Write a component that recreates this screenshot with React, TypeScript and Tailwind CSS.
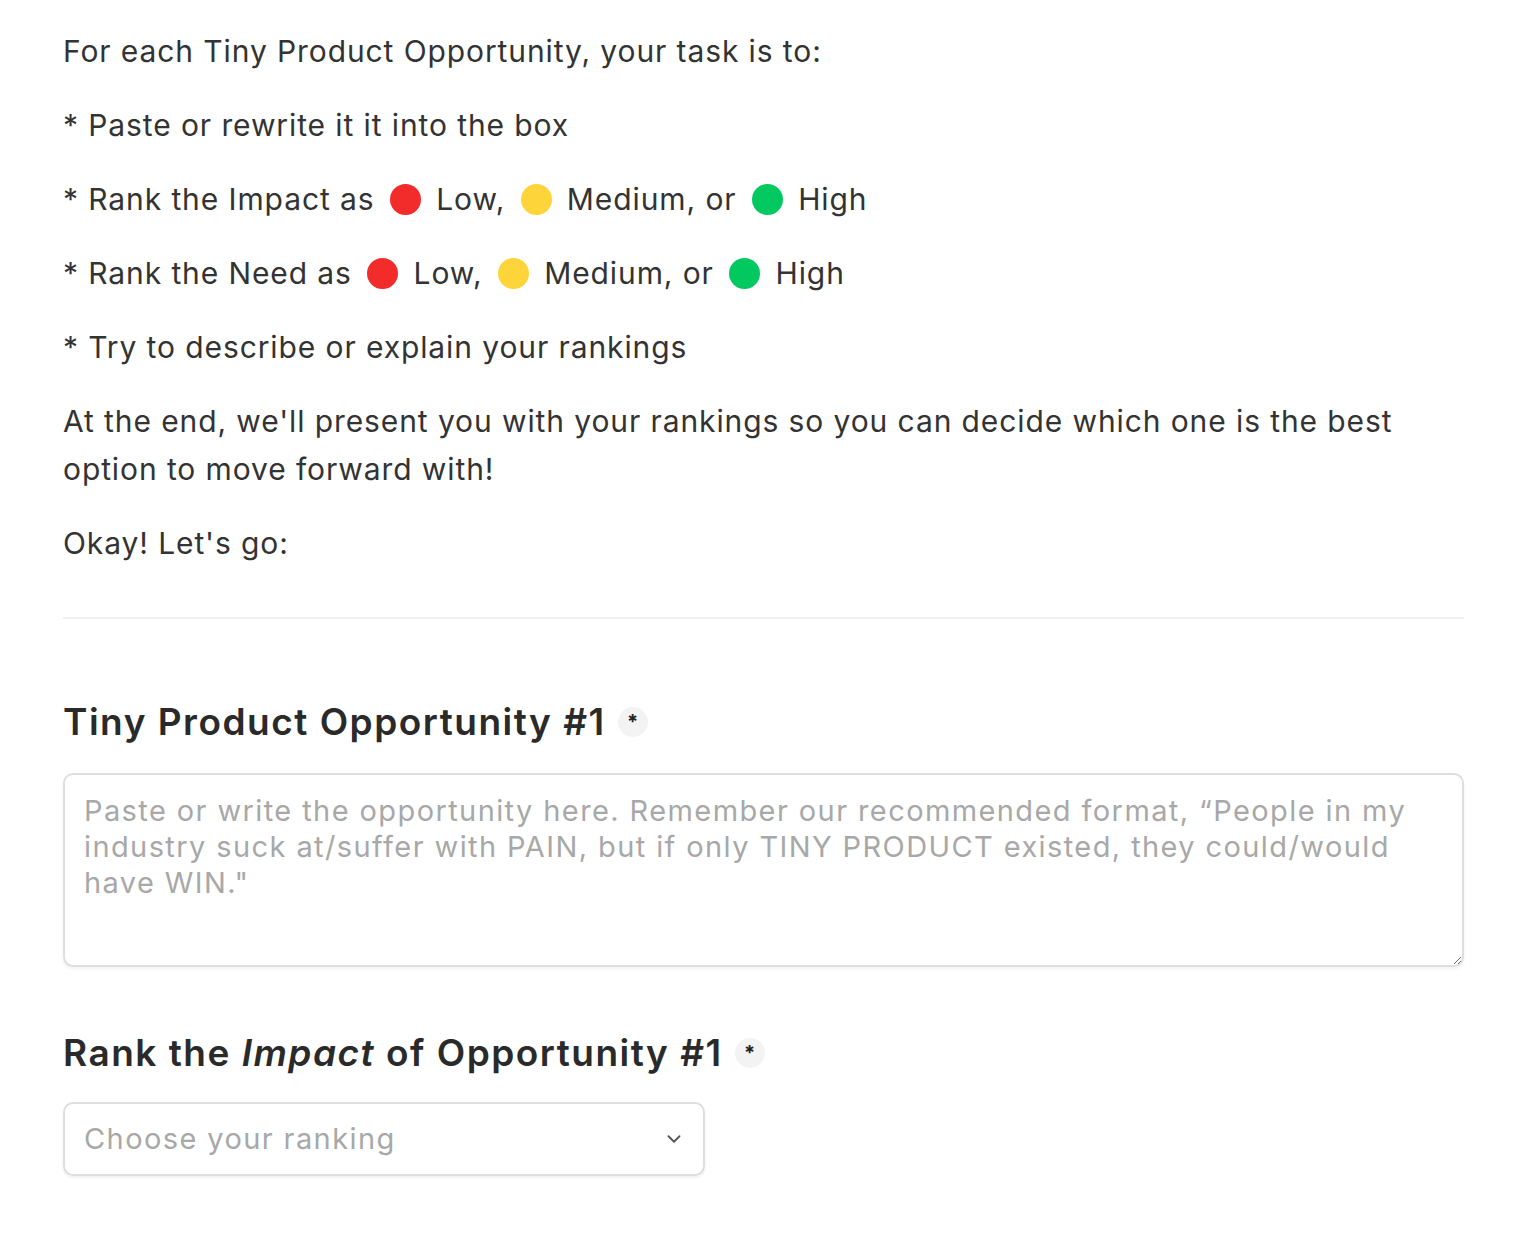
import { FC } from "react";

const Dot: FC<{ color: string }> = ({ color }) => (
  <span
    className={`inline-block w-[31px] h-[31px] rounded-full align-[-5px] mx-[6px] ${color}`}
  />
);

const RequiredBadge: FC = () => (
  <span className="inline-flex items-center justify-center w-[30px] h-[30px] rounded-full bg-[#f3f3f3] text-[#222] text-[20px] font-bold ml-[12px] leading-none tracking-normal">
    *
  </span>
);

const Ranks: FC = () => (
  <>
    {" "}
    <Dot color="bg-[#f22b2b]" /> Low, <Dot color="bg-[#fdd43a]" /> Medium, or{" "}
    <Dot color="bg-[#02c95f]" /> High
  </>
);

const App: FC = () => {
  return (
    <div
      className="bg-white min-h-screen px-[63px] pt-[27px] text-[#333333]"
      style={{ fontFamily: "Inter, 'Noto Sans', sans-serif" }}
    >
      <div className="w-[1401px] text-[30px] tracking-[0.9px] leading-[48px] flex flex-col gap-[26px]">
        <p>For each Tiny Product Opportunity, your task is to:</p>
        <p>* Paste or rewrite it it into the box</p>
        <p>
          * Rank the Impact as<Ranks />
        </p>
        <p>
          * Rank the Need as<Ranks />
        </p>
        <p>* Try to describe or explain your rankings</p>
        <p>
          At the end, we'll present you with your rankings so you can decide which one is the best
          option to move forward with!
        </p>
        <p>Okay! Let's go:</p>
      </div>

      <hr className="w-[1401px] border-0 border-t-2 border-[#f0f0f0] mt-[50px]" />

      <div className="w-[1401px] mt-[78px]">
        <h2 className="text-[37px] font-semibold tracking-[1.5px] text-[#2a2a2a] leading-[50px] flex items-center">
          Tiny Product Opportunity #1
          <RequiredBadge />
        </h2>
        <textarea
          className="mt-[26px] block w-full h-[194px] border-2 border-[#dedede] rounded-[10px] px-[19px] py-[18px] text-[29px] tracking-[1.4px] leading-[36px] text-[#333] placeholder:text-[#a8a8a8] shadow-[0_2px_3px_rgba(0,0,0,0.06)] outline-none resize-y"
          placeholder={
            "Paste or write the opportunity here. Remember our recommended format, \u201cPeople in my industry suck at/suffer with PAIN, but if only TINY PRODUCT existed, they could/would have WIN.\""
          }
        />

        <h2 className="mt-[61px] text-[37px] font-semibold tracking-[1.5px] text-[#2a2a2a] leading-[50px] flex items-center">
          Rank the&nbsp;<em className="italic">Impact</em>&nbsp;of Opportunity #1
          <RequiredBadge />
        </h2>
        <div className="mt-[24px] w-[642px] h-[74px] border-2 border-[#dedede] rounded-[10px] shadow-[0_2px_3px_rgba(0,0,0,0.06)] flex items-center justify-between pl-[19px] pr-[18px]">
          <span className="text-[29px] tracking-[1.4px] text-[#a8a8a8]">Choose your ranking</span>
          <svg width="22" height="22" viewBox="0 0 24 24" fill="none" stroke="#555" strokeWidth="2" strokeLinecap="round" strokeLinejoin="round">
            <path d="m6 9 6 6 6-6" />
          </svg>
        </div>
      </div>
    </div>
  );
};

export default App;
